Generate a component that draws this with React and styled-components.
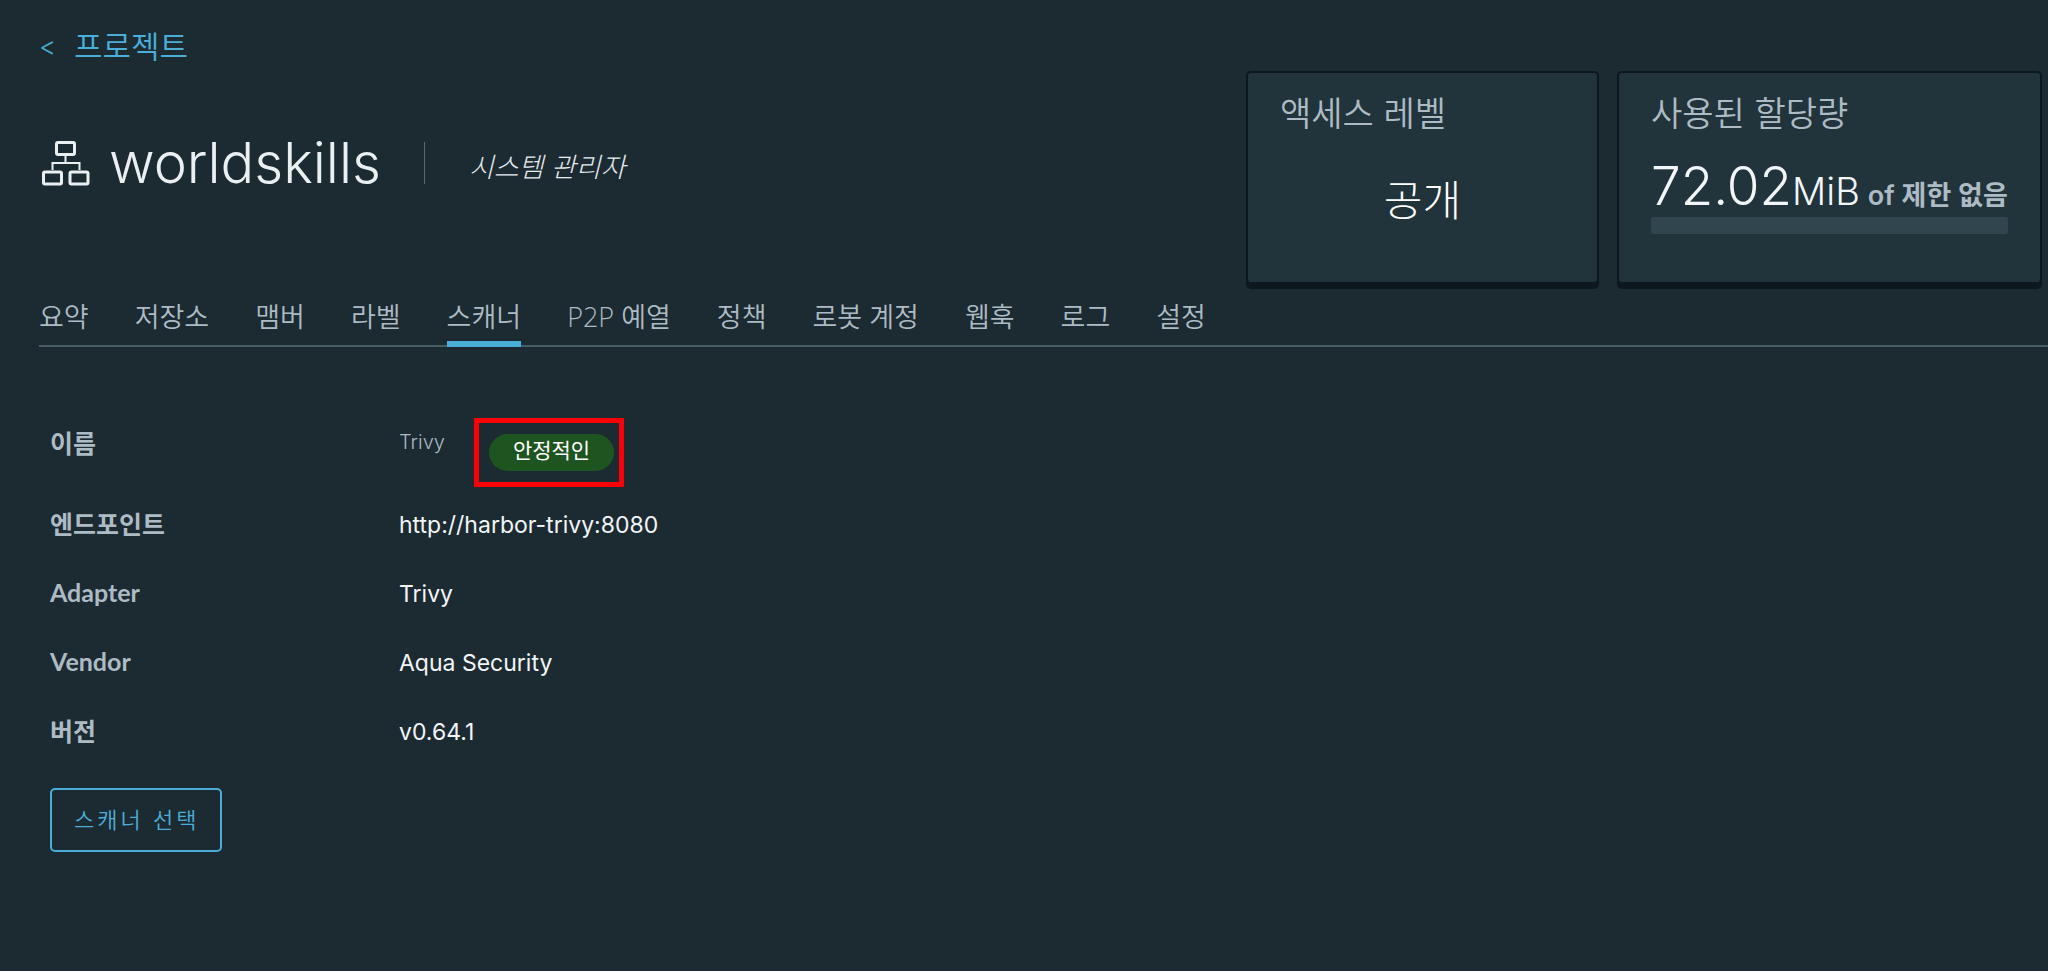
import React from 'react';
import styled, { createGlobalStyle } from 'styled-components';

const GlobalStyle = createGlobalStyle`
  *, *::before, *::after {
    box-sizing: border-box;
  }
  body {
    margin: 0;
    background-color: #1c2a32;
    color: #adbbc4;
    font-family: Inter, "Noto Sans CJK KR", sans-serif;
    font-size: 24px;
  }
`;
const Page = styled.main`
  min-height: 100vh;
  padding-left: 39px;
`;
const Header = styled.header`
  display: flex;
  justify-content: space-between;
  padding: 23px 8px 0 0;
`;
const BackLink = styled.a`
  display: flex;
  align-items: center;
  gap: 18px;
  color: #4aaed9;
  font-size: 31px;
  line-height: 48px;
  font-weight: 350;
  text-decoration: none;
`;
const BackArrow = styled.span`
  font-size: 26px;
`;
const ProjectHeading = styled.div`
  display: flex;
  align-items: center;
  margin-top: 56px;
`;
const ProjectIcon = styled.svg`
  width: 52px;
  height: 52px;
  margin-right: 18px;
`;
const ProjectName = styled.h1`
  margin: 0;
  color: #eaeff2;
  font-size: 56px;
  line-height: 72px;
  font-weight: 300;
`;
const Role = styled.em`
  margin-left: 43px;
  padding: 10px 0 0 44px;
  border-left: 1px solid #566872;
  color: #e6ecf0;
  font-size: 27px;
  line-height: 32px;
  font-weight: 300;
`;
const Cards = styled.div`
  display: flex;
  gap: 22px;
  margin-top: 50px;
`;
const Card = styled.section`
  width: ${props => props.width};
  height: 209px;
  padding: 18px 32px 0;
  border-radius: 3px;
  background-color: #21333b;
  box-shadow: 0 0 0 2px #0c181e, 0 5px 0 2px #0c181e;
`;
const CardTitle = styled.h2`
  margin: 0;
  font-size: 34px;
  line-height: 46px;
  font-weight: 350;
`;
const AccessLevel = styled.p`
  margin: 32px 0 0;
  color: #ffffff;
  font-size: 42px;
  line-height: 64px;
  font-weight: 300;
  text-align: center;
`;
const Quota = styled.p`
  height: 58px;
  margin: 19px 0 0;
  line-height: 60px;
  white-space: nowrap;
`;
const QuotaUsed = styled.span`
  color: #f2f6f8;
  font-size: 53px;
  font-weight: 300;
`;
const QuotaUnit = styled(QuotaUsed)`
  font-size: 38px;
`;
const QuotaLimit = styled.span`
  margin-left: 8px;
  font-size: 27px;
  font-weight: 600;
`;
const QuotaBar = styled.div`
  height: 17px;
  margin-top: 3px;
  border-radius: 2px;
  background-color: #30454e;
`;
const Tabs = styled.nav`
  display: flex;
  gap: 46px;
  padding-top: 12px;
  border-bottom: 2px solid #485c66;
  font-family: "Open Sans", "Noto Sans CJK KR", sans-serif;
`;
const Tab = styled.a`
  margin-bottom: -2px;
  padding-bottom: 2px;
  color: #adbbc4;
  font-size: 27px;
  line-height: 45px;
  font-weight: 350;
  text-decoration: none;
  white-space: nowrap;
  border-bottom: 6px solid ${props => (props.$active ? '#4aaed9' : 'transparent')};
`;
const Details = styled.dl`
  display: grid;
  grid-template-columns: 349px 1fr;
  grid-template-rows: 92px;
  grid-auto-rows: 69px;
  align-items: center;
  margin: 49px 0 0;
  padding-left: 11px;
`;
const Label = styled.dt`
  font-family: Lato, "Noto Sans CJK KR", sans-serif;
  font-size: 25px;
  font-weight: 700;
`;
const Value = styled.dd`
  display: flex;
  align-items: center;
  margin: 0;
  padding-top: 5px;
  color: #f2f6f8;
  font-size: 23px;
`;
const ScannerName = styled.span`
  margin-bottom: 5px;
  color: #adbbc4;
  font-size: 20px;
  font-weight: 350;
`;
const Highlight = styled.div`
  margin: 16px 0 0 29px;
  padding: 11px 5px 11px 10px;
  border: 5px solid #fb0007;
`;
const Badge = styled.span`
  display: block;
  padding: 0 24px 3px;
  border-radius: 19px;
  background-color: #1e541f;
  color: #ffffff;
  font-size: 21px;
  line-height: 34px;
`;
const SelectButton = styled.button`
  margin: 24px 0 0 11px;
  padding: 0 21px 0 22px;
  border: 2px solid #4aaed9;
  border-radius: 5px;
  background: transparent;
  color: #4aaed9;
  font: inherit;
  font-size: 22px;
  font-weight: 350;
  line-height: 60px;
  letter-spacing: 3px;
`;

const tabs = ['요약', '저장소', '맴버', '라벨', '스캐너', 'P2P 예열', '정책', '로봇 계정', '웹훅', '로그', '설정'];

const details = [
  ['엔드포인트', 'http://harbor-trivy:8080'],
  ['Adapter', 'Trivy'],
  ['Vendor', 'Aqua Security'],
  ['버전', 'v0.64.1'],
];

const OrganizationIcon = () => (
  <ProjectIcon viewBox="0 0 52 52" fill="none" stroke="#eaeff2" strokeWidth="3" aria-hidden="true">
    <rect x="17.5" y="5.5" width="18" height="12" rx="1.5" />
    <rect x="4.5" y="35" width="18" height="12" rx="1.5" />
    <rect x="31" y="35" width="18" height="12" rx="1.5" />
    <path d="M26.5 18v8M13.5 33v-7h27v7" strokeWidth="2" />
  </ProjectIcon>
);

const App = () => (
  <>
    <GlobalStyle />
    <Page>
      <Header>
        <div>
          <BackLink href="#projects">
            <BackArrow>&lt;</BackArrow>
            프로젝트
          </BackLink>
          <ProjectHeading>
            <OrganizationIcon />
            <ProjectName>worldskills</ProjectName>
            <Role>시스템 관리자</Role>
          </ProjectHeading>
        </div>
        <Cards>
          <Card width="349px">
            <CardTitle>액세스 레벨</CardTitle>
            <AccessLevel>공개</AccessLevel>
          </Card>
          <Card width="421px">
            <CardTitle>사용된 할당량</CardTitle>
            <Quota>
              <QuotaUsed>72.02</QuotaUsed>
              <QuotaUnit>MiB</QuotaUnit>
              <QuotaLimit>of 제한 없음</QuotaLimit>
            </Quota>
            <QuotaBar />
          </Card>
        </Cards>
      </Header>
      <Tabs>
        {tabs.map(tab => (
          <Tab key={tab} href="#tab" $active={tab === '스캐너'}>{tab}</Tab>
        ))}
      </Tabs>
      <Details>
        <Label>이름</Label>
        <Value>
          <ScannerName>Trivy</ScannerName>
          <Highlight>
            <Badge>안정적인</Badge>
          </Highlight>
        </Value>
        {details.map(([label, value]) => (
          <React.Fragment key={label}>
            <Label>{label}</Label>
            <Value>{value}</Value>
          </React.Fragment>
        ))}
      </Details>
      <SelectButton type="button">스캐너 선택</SelectButton>
    </Page>
  </>
);

export default App;
